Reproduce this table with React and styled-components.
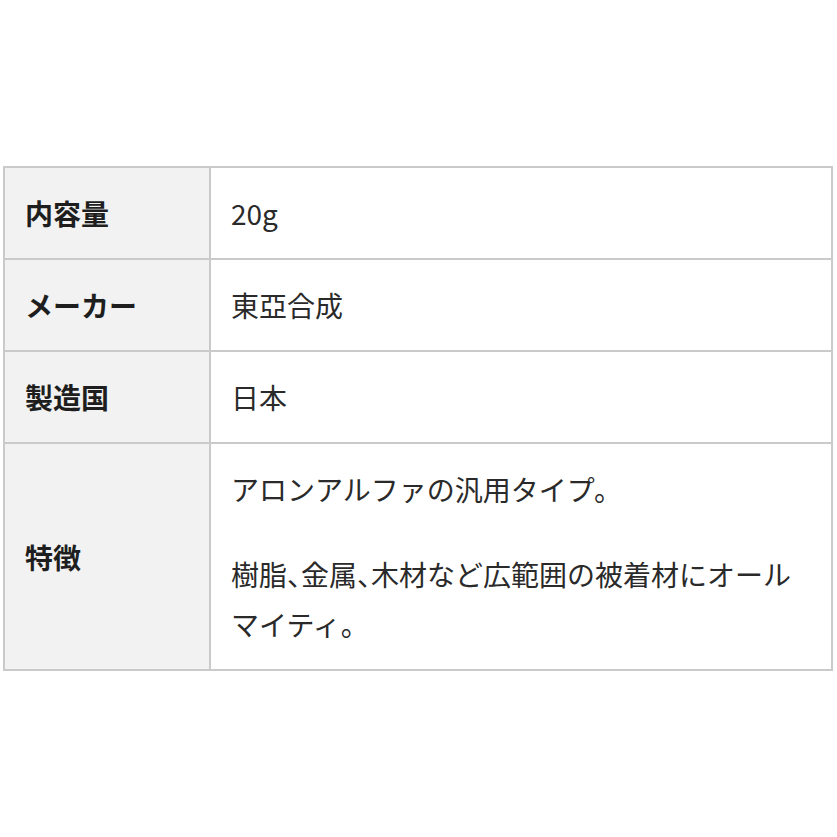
import styled, { createGlobalStyle } from "styled-components";

const GlobalStyle = createGlobalStyle`
  html, body {
    margin: 0;
    padding: 0;
    background: #ffffff;
  }
  body {
    font-family: "Noto Sans CJK JP", "Noto Sans", sans-serif;
    color: #222222;
  }
`;

const Page = styled.div`
  width: 837px;
  height: 837px;
  padding: 166px 3px 0 3px;
  box-sizing: border-box;
`;

const SpecTable = styled.table`
  width: 830px;
  border-collapse: collapse;
  border: 2px solid #cacaca;
`;

const Label = styled.th`
  width: 206px;
  box-sizing: border-box;
  background: #f2f2f2;
  border: 2px solid #cacaca;
  padding: 20px 20px;
  text-align: left;
  font-size: 28px;
  line-height: 50px;
  font-weight: 700;
  color: #1e1e1e;
  vertical-align: middle;
`;

const Value = styled.td`
  border: 2px solid #cacaca;
  padding: 20px 20px;
  font-size: 28px;
  line-height: 50px;
  font-weight: 400;
  color: #2a2a2a;
  vertical-align: middle;
`;

// half-width 、 like the original page
const Para = styled.p`
  margin: 0 0 35px 0;
  max-width: 570px;
  font-feature-settings: "halt";
  &:last-child {
    margin-bottom: 0;
  }
`;

const specs = [
  { label: "内容量", value: ["20g"] },
  { label: "メーカー", value: ["東亞合成"] },
  { label: "製造国", value: ["日本"] },
  {
    label: "特徴",
    value: [
      "アロンアルファの汎用タイプ。",
      "樹脂、金属、木材など広範囲の被着材にオールマイティ。",
    ],
  },
];

const App = () => {
  return (
    <>
      <GlobalStyle />
      <Page>
        <SpecTable>
          <tbody>
            {specs.map((row, index) => (
              <tr key={index}>
                <Label>{row.label}</Label>
                <Value>
                  {row.value.length > 1
                    ? row.value.map((text, i) => <Para key={i}>{text}</Para>)
                    : row.value[0]}
                </Value>
              </tr>
            ))}
          </tbody>
        </SpecTable>
      </Page>
    </>
  );
};

export default App;
